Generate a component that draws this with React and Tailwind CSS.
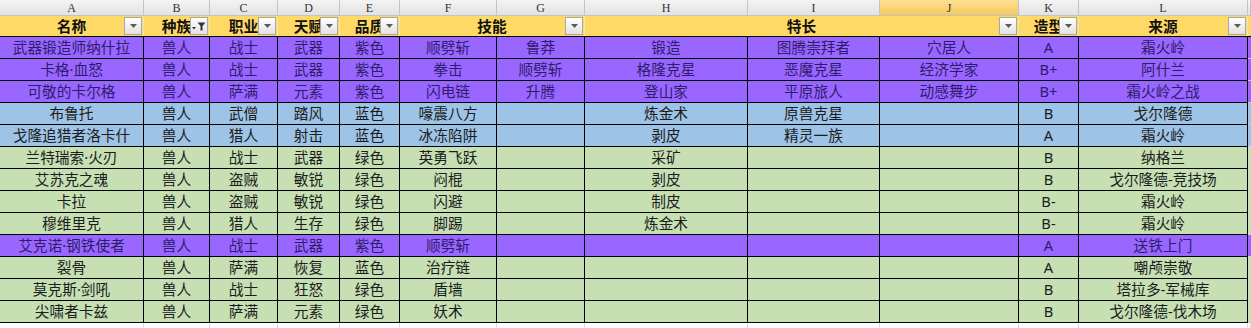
import React from "react";

const COLS = "grid-cols-[144px_66px_68px_62px_60px_97px_88px_163px_132px_139px_60px_169px_1fr]";
const LETTERS = ["A", "B", "C", "D", "E", "F", "G", "H", "I", "J", "K", "L", ""];

const ROWS = [
  ["p", ["武器锻造师纳什拉", "兽人", "战士", "武器", "紫色", "顺劈斩", "鲁莽", "锻造", "图腾崇拜者", "穴居人", "A", "霜火岭"]],
  ["p", ["卡格·血怒", "兽人", "战士", "武器", "紫色", "拳击", "顺劈斩", "格隆克星", "恶魔克星", "经济学家", "B+", "阿什兰"]],
  ["p", ["可敬的卡尔格", "兽人", "萨满", "元素", "紫色", "闪电链", "升腾", "登山家", "平原旅人", "动感舞步", "B+", "霜火岭之战"]],
  ["b", ["布鲁托", "兽人", "武僧", "踏风", "蓝色", "嚎震八方", "", "炼金术", "原兽克星", "", "B", "戈尔隆德"]],
  ["b", ["戈隆追猎者洛卡什", "兽人", "猎人", "射击", "蓝色", "冰冻陷阱", "", "剥皮", "精灵一族", "", "A", "霜火岭"]],
  ["g", ["兰特瑞索·火刃", "兽人", "战士", "武器", "绿色", "英勇飞跃", "", "采矿", "", "", "B", "纳格兰"]],
  ["g", ["艾苏克之魂", "兽人", "盗贼", "敏锐", "绿色", "闷棍", "", "剥皮", "", "", "B", "戈尔隆德-竞技场"]],
  ["g", ["卡拉", "兽人", "盗贼", "敏锐", "绿色", "闪避", "", "制皮", "", "", "B-", "霜火岭"]],
  ["g", ["穆维里克", "兽人", "猎人", "生存", "绿色", "脚踢", "", "炼金术", "", "", "B-", "霜火岭"]],
  ["p", ["艾克诺·钢铁使者", "兽人", "战士", "武器", "紫色", "顺劈斩", "", "", "", "", "A", "送铁上门"]],
  ["g", ["裂骨", "兽人", "萨满", "恢复", "蓝色", "治疗链", "", "", "", "", "A", "嘲颅崇敬"]],
  ["g", ["莫克斯·剑吼", "兽人", "战士", "狂怒", "绿色", "盾墙", "", "", "", "", "B", "塔拉多-军械库"]],
  ["g", ["尖啸者卡兹", "兽人", "萨满", "元素", "绿色", "妖术", "", "", "", "", "B", "戈尔隆德-伐木场"]],
];

const BG = { p: "bg-[#9966ff]", b: "bg-[#9dc3e6]", g: "bg-[#c6e0b4]" };
const FG = { p: "text-[#2f1c70]", b: "text-[#1c1c1c]", g: "text-[#1c1c1c]" };

function FilterButton({ active }) {
  return (
    <div className="absolute right-[1px] top-[1px] w-[18px] h-[18px] border border-[#a8a8a8] bg-gradient-to-b from-[#ffffff] to-[#e2e2e2] flex items-center justify-center">
      {active ? (
        <svg width="14" height="9" viewBox="0 0 14 9">
          <polygon points="0,5 4,5 2,7.5" fill="#333" />
          <polygon points="5.5,0.5 13.5,0.5 10.5,4 10.5,8.5 8.5,8.5 8.5,4" fill="#333" />
        </svg>
      ) : (
        <svg width="7" height="4" viewBox="0 0 7 4">
          <polygon points="0,0 7,0 3.5,4" fill="#5a5a5a" />
        </svg>
      )}
    </div>
  );
}

function HeadCell({ label, span = "", active, button = true, last = false }) {
  return (
    <div
      className={`relative h-full flex items-center justify-center bg-[#ffd966] ${span} ${
        last ? "" : "border-r border-[#efe3b8]"
      }`}
    >
      <span className="font-bold text-[14.7px] text-[#111] leading-none">{label}</span>
      {button && <FilterButton active={active} />}
    </div>
  );
}

export default function App() {
  return (
    <div
      className="w-[1251px] h-[328px] overflow-hidden bg-white"
      style={{ fontFamily: '"Noto Sans", "Noto Sans CJK SC", sans-serif' }}
    >
      {/* column letters */}
      <div className={`grid ${COLS} h-[16px]`}>
        {LETTERS.map((l, i) => (
          <div
            key={i}
            className={`flex items-center justify-center border-r border-b border-[#c3c3c3] text-[12px] leading-none text-[#333] ${
              l === "J"
                ? "bg-gradient-to-b from-[#fbe196] to-[#f5c85a]"
                : "bg-gradient-to-b from-[#f4f4f4] to-[#e2e2e2]"
            }`}
            style={{ fontFamily: '"Liberation Serif", serif' }}
          >
            {l}
          </div>
        ))}
      </div>

      {/* filter header row */}
      <div className={`grid ${COLS} h-[21px] border-b border-black`}>
        <HeadCell label="名称" />
        <HeadCell label="种族" active />
        <HeadCell label="职业" />
        <HeadCell label="天赋" />
        <HeadCell label="品质" />
        <HeadCell label="技能" span="col-span-2" />
        <HeadCell label="特长" span="col-span-3" />
        <HeadCell label="造型" />
        <HeadCell label="来源" />
        <HeadCell label="" button={false} last />
      </div>

      {/* data rows */}
      {ROWS.map(([c, vals], r) => (
        <div key={r} className={`grid ${COLS} h-[22px]`}>
          {vals.map((v, i) => (
            <div
              key={i}
              className={`flex items-center justify-center border-r border-b border-black text-[14.7px] leading-none whitespace-nowrap overflow-hidden ${BG[c]} ${FG[c]}`}
            >
              {v}
            </div>
          ))}
          <div className={`border-b border-[#d0d0d0] ${BG[c]}`} />
        </div>
      ))}

      {/* empty sheet row */}
      <div className={`grid ${COLS} h-[5px]`}>
        {LETTERS.map((l, i) => (
          <div key={i} className="border-r border-[#d9d9d9] bg-white" />
        ))}
      </div>
    </div>
  );
}
